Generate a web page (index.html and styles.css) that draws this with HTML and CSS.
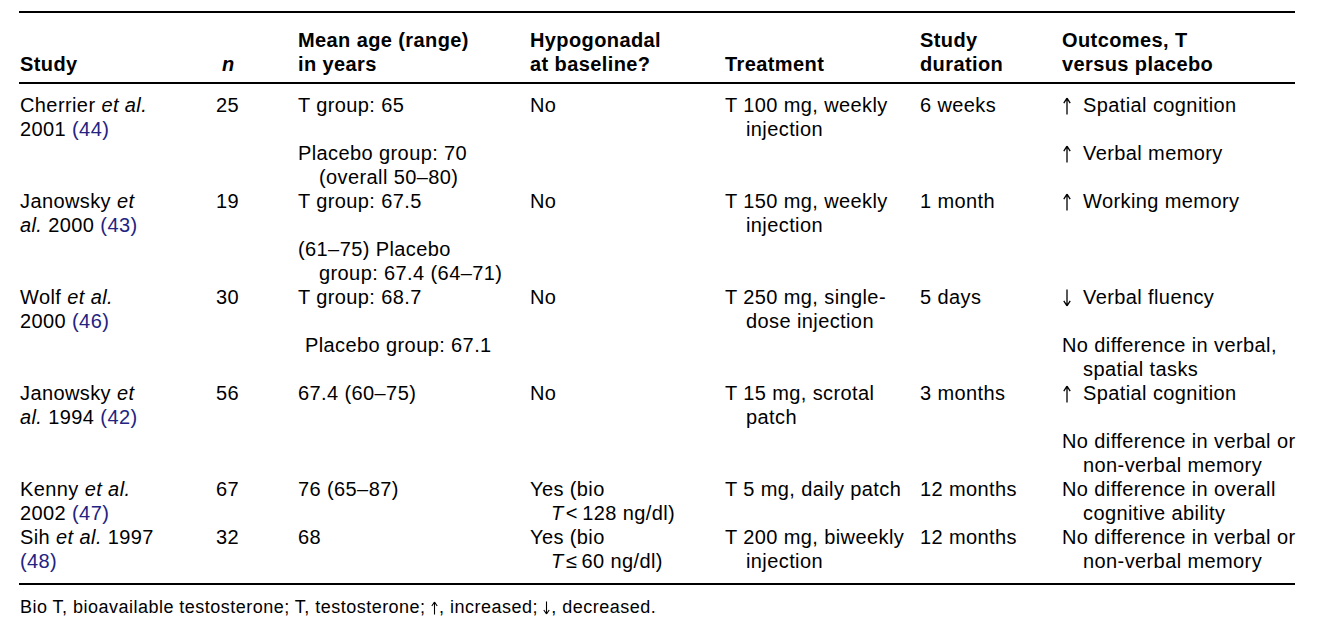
FILE: index.html
```html
<!DOCTYPE html>
<html lang="en">
<head>
<meta charset="utf-8">
<title>Testosterone and cognition trials</title>
<link rel="stylesheet" href="styles.css">
</head>
<body>
<div class="page">
  <table class="trials">
    <colgroup>
      <col class="c-study"><col class="c-n"><col class="c-age"><col class="c-hypo"><col class="c-treat"><col class="c-dur"><col class="c-out">
    </colgroup>
    <thead>
      <tr>
        <th>Study</th>
        <th class="num-h"><i>n</i></th>
        <th>Mean age (range)<br>in years</th>
        <th>Hypogonadal<br>at baseline?</th>
        <th>Treatment</th>
        <th>Study<br>duration</th>
        <th>Outcomes, T<br>versus placebo</th>
      </tr>
    </thead>
    <tbody>
      <tr>
        <td>Cherrier <i>et al.</i><br>2001 <span class="ref">(44)</span></td>
        <td class="num">25</td>
        <td><div class="p">T group: 65</div><div class="p gap">Placebo group: 70<br>(overall 50–80)</div></td>
        <td>No</td>
        <td><div class="p">T 100 mg, weekly<br>injection</div></td>
        <td>6 weeks</td>
        <td><div class="p"><span class="arr" aria-label="↑"><svg width="8" height="18" viewBox="0 0 8 18"><path d="M4 1.5V17.5M4 1.2L0.8 6.2M4 1.2L7.2 6.2" fill="none" stroke="#000" stroke-width="1.3"/></svg></span>Spatial cognition</div><div class="p gap"><span class="arr" aria-label="↑"><svg width="8" height="18" viewBox="0 0 8 18"><path d="M4 1.5V17.5M4 1.2L0.8 6.2M4 1.2L7.2 6.2" fill="none" stroke="#000" stroke-width="1.3"/></svg></span>Verbal memory</div></td>
      </tr>
      <tr>
        <td>Janowsky <i>et</i><br><i>al.</i> 2000 <span class="ref">(43)</span></td>
        <td class="num">19</td>
        <td><div class="p">T group: 67.5</div><div class="p gap">(61–75) Placebo<br>group: 67.4 (64–71)</div></td>
        <td>No</td>
        <td><div class="p">T 150 mg, weekly<br>injection</div></td>
        <td>1 month</td>
        <td><div class="p"><span class="arr" aria-label="↑"><svg width="8" height="18" viewBox="0 0 8 18"><path d="M4 1.5V17.5M4 1.2L0.8 6.2M4 1.2L7.2 6.2" fill="none" stroke="#000" stroke-width="1.3"/></svg></span>Working memory</div></td>
      </tr>
      <tr>
        <td>Wolf <i>et al.</i><br>2000 <span class="ref">(46)</span></td>
        <td class="num">30</td>
        <td><div class="p">T group: 68.7</div><div class="p gap shift">Placebo group: 67.1</div></td>
        <td>No</td>
        <td><div class="p">T 250 mg, single-<br>dose injection</div></td>
        <td>5 days</td>
        <td><div class="p"><span class="arr" aria-label="↓"><svg width="8" height="18" viewBox="0 0 8 18"><path d="M4 0.5V16.5M4 16.8L0.8 11.8M4 16.8L7.2 11.8" fill="none" stroke="#000" stroke-width="1.3"/></svg></span>Verbal fluency</div><div class="p gap">No difference in verbal,<br>spatial tasks</div></td>
      </tr>
      <tr>
        <td>Janowsky <i>et</i><br><i>al.</i> 1994 <span class="ref">(42)</span></td>
        <td class="num">56</td>
        <td>67.4 (60–75)</td>
        <td>No</td>
        <td><div class="p">T 15 mg, scrotal<br>patch</div></td>
        <td>3 months</td>
        <td><div class="p"><span class="arr" aria-label="↑"><svg width="8" height="18" viewBox="0 0 8 18"><path d="M4 1.5V17.5M4 1.2L0.8 6.2M4 1.2L7.2 6.2" fill="none" stroke="#000" stroke-width="1.3"/></svg></span>Spatial cognition</div><div class="p gap">No difference in verbal or<br>non-verbal memory</div></td>
      </tr>
      <tr>
        <td>Kenny <i>et al.</i><br>2002 <span class="ref">(47)</span></td>
        <td class="num">67</td>
        <td>76 (65–87)</td>
        <td><div class="p">Yes (bio<br><i>T</i>&#8202;&lt;&#8201;128 ng/dl)</div></td>
        <td><div class="p">T 5 mg, daily patch</div></td>
        <td>12 months</td>
        <td><div class="p">No difference in overall<br>cognitive ability</div></td>
      </tr>
      <tr class="last">
        <td>Sih <i>et al.</i> 1997<br><span class="ref">(48)</span></td>
        <td class="num">32</td>
        <td>68</td>
        <td><div class="p">Yes (bio<br><i>T</i>&#8202;≤&#8201;60 ng/dl)</div></td>
        <td><div class="p">T 200 mg, biweekly<br>injection</div></td>
        <td>12 months</td>
        <td><div class="p">No difference in verbal or<br>non-verbal memory</div></td>
      </tr>
    </tbody>
  </table>
  <p class="note">Bio T, bioavailable testosterone; T, testosterone; <span class="arr-s" aria-label="↑"><svg width="7" height="14" viewBox="0 0 7 14"><path d="M3.5 1.2V13.5M3.5 1L0.8 5M3.5 1L6.2 5" fill="none" stroke="#000" stroke-width="1.1"/></svg></span>, increased; <span class="arr-s" aria-label="↓"><svg width="7" height="14" viewBox="0 0 7 14"><path d="M3.5 0.5V12.8M3.5 13L0.8 9M3.5 13L6.2 9" fill="none" stroke="#000" stroke-width="1.1"/></svg></span>, decreased.</p>
</div>
</body>
</html>
```

FILE: styles.css
```css
html, body {
  margin: 0;
  padding: 0;
  background: #ffffff;
}

body {
  font-family: "Liberation Sans", Arial, sans-serif;
  color: #000000;
}

.page {
  padding: 11px 0 0 19px;
}

.trials {
  border-collapse: collapse;
  table-layout: fixed;
  width: 1276px;
  font-size: 20px;
  line-height: 24px;
  letter-spacing: 0.4px;
}

.c-study { width: 197px; }
.c-n { width: 82px; }
.c-age { width: 232px; }
.c-hypo { width: 195px; }
.c-treat { width: 195px; }
.c-dur { width: 142px; }
.c-out { width: 233px; }

.trials thead tr {
  border-top: 2px solid #000;
  border-bottom: 2px solid #000;
}

.trials th {
  text-align: left;
  vertical-align: bottom;
  font-weight: bold;
  padding: 15px 0 6px 0;
  white-space: nowrap;
}

.trials th:first-child,
.trials td:first-child {
  padding-left: 1px;
}

.trials th.num-h {
  padding-left: 6px;
}

.trials td {
  vertical-align: top;
  padding: 0;
  white-space: nowrap;
}

.trials tbody tr:first-child td {
  padding-top: 9px;
}

.trials tbody tr.last {
  border-bottom: 2px solid #000;
}

.trials tbody tr.last td {
  padding-bottom: 10px;
}

.p {
  padding-left: 21px;
  text-indent: -21px;
}

.p.gap {
  margin-top: 24px;
}

.p.shift {
  padding-left: 28px;
}

.arr {
  display: inline-block;
  width: 21px;
  height: 18px;
  text-indent: 0;
  vertical-align: -3px;
  padding-left: 1px;
  box-sizing: border-box;
}

.arr svg,
.arr-s svg {
  display: block;
}

.arr-s {
  display: inline-block;
  width: 8px;
  height: 14px;
  vertical-align: -2px;
}

.ref {
  color: #232382;
}

.note {
  margin: 11px 0 0 1px;
  font-size: 18px;
  line-height: 22px;
  letter-spacing: 0.48px;
}
```
